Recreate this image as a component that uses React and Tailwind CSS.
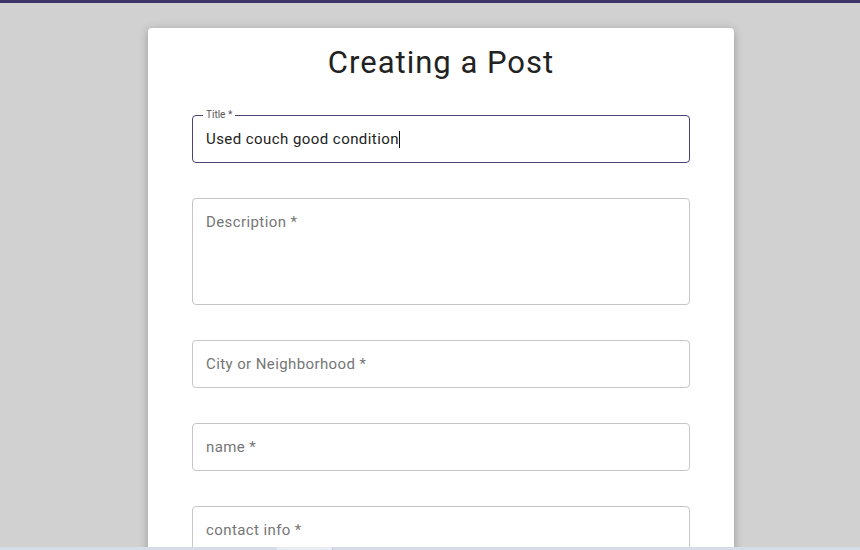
export default function App() {
  const font = { fontFamily: "Roboto, 'Liberation Sans', sans-serif" };

  const fields = [
    { label: "Description *", tall: true },
    { label: "City or Neighborhood *" },
    { label: "name *" },
    { label: "contact info *" },
  ];

  return (
    <div className="h-[550px] w-[860px] flex flex-col overflow-hidden bg-[#d1d1d1]" style={font}>
      <div className="h-[3px] bg-[#3d3566] shrink-0" />
      <div className="flex-1 overflow-hidden">
        <div className="ml-[148px] mt-[25px] w-[586px] bg-white rounded-[4px] shadow-[0_2px_10px_rgba(0,0,0,0.28)] px-[44px] pt-[17px] pb-10">
          <h1 className="text-center text-[31px] leading-[36px] text-[#222] tracking-[1px]">
            Creating a Post
          </h1>

          {/* focused title field */}
          <div className="relative mt-[34px] h-[48px] rounded-[4px] border border-[#4b4275] flex items-center px-[13px]">
            <span className="absolute -top-[7px] left-[10px] bg-white px-[3px] text-[10px] leading-[12px] text-[#555]">
              Title *
            </span>
            <span className="text-[15px] tracking-[0.44px] text-[#222]">Used couch good condition</span>
            <span className="w-px h-[17px] bg-[#111]" />
          </div>

          <div className="flex flex-col gap-[35px] mt-[35px]">
            {fields.map((f) => (
              <div
                key={f.label}
                className={
                  "rounded-[4px] border border-[#c6c6c6] px-[13px] " +
                  (f.tall ? "h-[107px] pt-[11px]" : "h-[48px] flex items-center")
                }
              >
                <span className="text-[15px] leading-[20px] tracking-[0.4px] text-[#767676]">{f.label}</span>
              </div>
            ))}
          </div>
        </div>
      </div>
      <div className="h-[3px] shrink-0 flex bg-[#d6dde9]">
        <div className="w-[277px]" />
        <div className="w-[55px] bg-[#e8ecf3]" />
        <div className="w-px bg-[#c0c8d6]" />
      </div>
    </div>
  );
}
